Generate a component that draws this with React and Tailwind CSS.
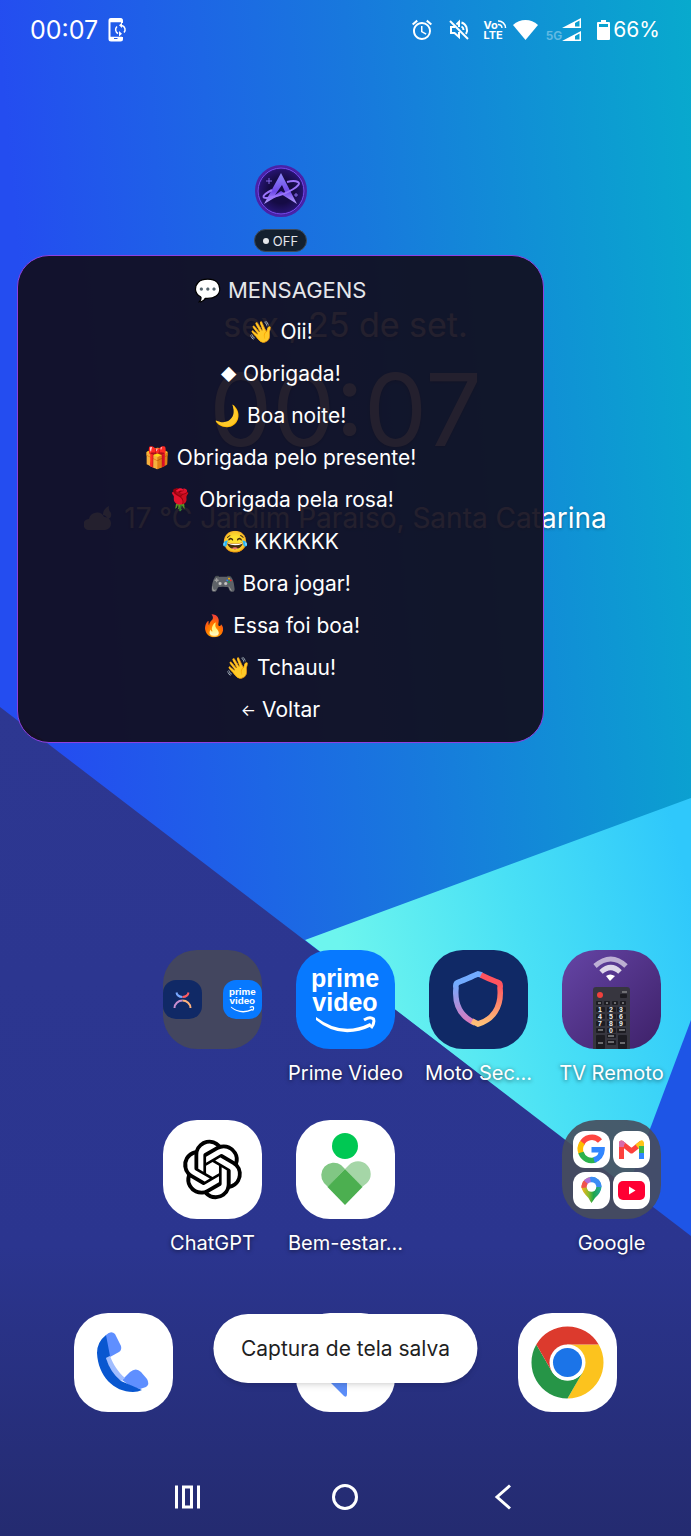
import React from 'react';
import { MdAlarm } from 'react-icons/md';

const messages = [
    { icon: '👋', text: 'Oii!' },
    { icon: '◆', text: 'Obrigada!', small: true },
    { icon: '🌙', text: 'Boa noite!' },
    { icon: '🎁', text: 'Obrigada pelo presente!' },
    { icon: '🌹', text: 'Obrigada pela rosa!' },
    { icon: '😂', text: 'KKKKKK' },
    { icon: '🎮', text: 'Bora jogar!' },
    { icon: '🔥', text: 'Essa foi boa!' },
    { icon: '👋', text: 'Tchauu!' },
    { icon: '←', text: 'Voltar', small: true }
];

const Wallpaper = () => (
    <svg className="absolute inset-0 h-full w-full" viewBox="0 0 691 1536" preserveAspectRatio="none" aria-hidden="true">
        <defs>
            <linearGradient id="sky" gradientUnits="userSpaceOnUse" x1="0" y1="60" x2="691" y2="0">
                <stop offset="0" stopColor="#244df0" />
                <stop offset="0.5" stopColor="#1878dd" />
                <stop offset="1" stopColor="#08aacd" />
            </linearGradient>
            <linearGradient id="beam" gradientUnits="userSpaceOnUse" x1="350" y1="980" x2="691" y2="890">
                <stop offset="0" stopColor="#6df5ee" />
                <stop offset="0.5" stopColor="#49e0f5" />
                <stop offset="1" stopColor="#2fc8fb" />
            </linearGradient>
            <linearGradient id="ground" x1="0" y1="0" x2="0" y2="1">
                <stop offset="0" stopColor="#2d3791" />
                <stop offset="0.65" stopColor="#2b358f" />
                <stop offset="1" stopColor="#242b70" />
            </linearGradient>
        </defs>
        <rect width="691" height="1536" fill="url(#sky)" />
        <path d="M305 940L691 798V1240L629 1190Z" fill="url(#beam)" />
        <path d="M691 1020V1240L627 1190Z" fill="#1e55e6" />
        <path d="M0 707L691 1236V1536H0Z" fill="url(#ground)" />
    </svg>
);

const PhoneSyncIcon = () => (
    <svg width="20" height="24" viewBox="0 0 20 24" fill="none" stroke="currentColor">
        <path d="M14 5V2.5Q14 1 12.500 1H3Q1.500 1 1.500 2.500V21Q1.500 22.500 3 22.500H12.500Q14 22.500 14 21V19" strokeWidth="2" />
        <path d="M1.500 2.500H14M1.500 20.500H14" strokeWidth="3.500" />
        <path d="M6 20.500H9.500" stroke="#1f5de8" strokeWidth="1" />
        <path d="M10 15.500A4.300 4.300 0 0 1 9 8.500M14 7.500A4.300 4.300 0 0 1 16 14.500" strokeWidth="1.500" />
        <path d="M14 4.500V10L11 7.300ZM11 13V18.500L14 15.800Z" fill="currentColor" stroke="none" />
    </svg>
);

const MutedIcon = () => (
    <svg width="22" height="22" viewBox="0 0 22 22" fill="none" stroke="currentColor" strokeWidth="2">
        <path d="M2 2L20 20" />
        <path d="M7 8H3V14H6.500L11 18V13" />
        <path d="M8.500 5.500L11 3V8" />
        <path d="M13.500 3.500A8 8 0 0 1 18 15M13.500 7.500A4 4 0 0 1 15.500 11" />
    </svg>
);

const SignalIcon = () => (
    <svg width="19" height="24" viewBox="0 0 19 24">
        <path d="M0 10L19 0V10Z M0 23L19 13V23Z" fill="currentColor" />
        <path d="M13 5L17.500 2.500V8.500H13Z M13 18L17.500 15.500V21.500H13Z" fill="#0a9fd0" />
    </svg>
);

const StatusBar = () => (
    <header className="flex h-[60px] items-center justify-between pr-[31px] pl-[30px]">
        <div className="flex items-center gap-2.5">
            <span className="text-[25px] leading-7">00:07</span>
            <PhoneSyncIcon />
        </div>
        <div className="flex items-center">
            <MdAlarm size={24} />
            <div className="ml-3.5">
                <MutedIcon />
            </div>
            <div className="relative ml-3.5 text-[11px] leading-[10px] font-bold">
                <p>Vo</p>
                <p>LTE</p>
                <svg className="absolute -top-px left-[13px]" width="10" height="10" viewBox="0 0 10 10" fill="none" stroke="currentColor" strokeWidth="1.500">
                    <path d="M1 2A7 7 0 0 1 8.500 9M1 5.500A4 4 0 0 1 5 9" />
                </svg>
            </div>
            <svg className="ml-2.5" width="25" height="20" viewBox="0 0 25 20" fill="currentColor">
                <path d="M12.500 20L0 5Q5.500 0 12.500 0T25 5Z" />
            </svg>
            <span className="mt-3 ml-2 text-[12px] leading-3 font-semibold opacity-35">5G</span>
            <SignalIcon />
            <svg className="ml-4" width="13" height="20" viewBox="0 0 13 20">
                <path d="M4 0H9V2H12Q13 2 13 3V19Q13 20 12 20H1Q0 20 0 19V3Q0 2 1 2H4Z" fill="currentColor" />
                <path d="M2 4H11V7H2Z" fill="#0aa2cf" />
            </svg>
            <span className="ml-[3px] text-[21px] leading-7">66%</span>
        </div>
    </header>
);

const ClockWidget = () => (
    <section className="flex h-[890px] flex-col items-center pt-[244px] [text-shadow:0_1px_3px_rgba(0,0,0,0.35)]">
        <p className="text-[34px] leading-[42px]">sex., 25 de set.</p>
        <p className="mt-3 text-[100px] leading-[104px]">00:07</p>
        <div className="mt-[38px] flex items-center gap-3">
            <svg width="28" height="26" viewBox="0 0 28 26" fill="currentColor">
                <path d="M5 25A5 5 0 0 1 5 14A8 8 0 0 1 20 12A6.500 6.500 0 0 1 21 25Z" />
                <path d="M19 10Q19 4 25 1Q24 5 27 8Q28 13 24 14Q22 10 19 10Z" />
            </svg>
            <p className="text-[28px] leading-9">17 °C Jardim Paraíso, Santa Catarina</p>
        </div>
    </section>
);

const PrimeArt = () => (
    <svg className="h-full w-full" viewBox="0 0 99 99" fill="#fff">
        <g fontFamily="Liberation Sans, sans-serif" fontWeight="700" fontSize="25" textAnchor="middle">
            <text x="49" y="37">prime</text>
            <text x="49" y="61">video</text>
        </g>
        <path d="M20 67Q46 87 74 73L76 76Q45 91 20 70Z" />
        <path d="M68 70Q74 66 77.500 69Q79 73 75 78" fill="none" stroke="#fff" strokeWidth="3" />
    </svg>
);

const ShieldArt = () => (
    <svg className="h-full w-full" viewBox="0 0 99 99" fill="none">
        <defs>
            <linearGradient id="shieldLeft" x1="0" y1="0" x2="0" y2="1">
                <stop offset="0.2" stopColor="#72abff" />
                <stop offset="1" stopColor="#dc79bd" />
            </linearGradient>
            <linearGradient id="shieldRight" x1="0" y1="0" x2="0" y2="1">
                <stop offset="0.2" stopColor="#ff535f" />
                <stop offset="1" stopColor="#ffc078" />
            </linearGradient>
        </defs>
        <path d="M53 25L49 24L44 26Q40 28 30 32Q26 33 27 38C25 58 35 68 46 73" stroke="url(#shieldLeft)" strokeWidth="5.500" />
        <path d="M52 25Q60 29 68 32Q72 33 71 38C73 58 63 70 49 74L43 71" stroke="url(#shieldRight)" strokeWidth="5.500" />
    </svg>
);

const RemoteArt = () => (
    <svg className="h-full w-full" viewBox="0 0 99 99">
        <g fill="none" stroke="#fff" strokeWidth="5">
            <path d="M33 16Q49 2 64 16" opacity="0.600" />
            <path d="M39 22Q49 13 58 22" opacity="0.800" />
        </g>
        <path d="M44 26Q48 23 53 26L48 31Z" fill="#fff" />
        <path d="M31 99V40Q31 37 34 37H65Q68 37 68 40V99Z" fill="#37363f" />
        <circle cx="38" cy="45" r="3" fill="#f0403c" />
        <path d="M60 42H65" stroke="#aaa" />
        <g fill="#1d1c22">
            <rect x="58" y="44" width="7" height="4" rx="1" />
            {[34, 42, 50, 58].map((x) => (
                <rect key={x} x={x} y="51" width="6" height="4" rx="1" />
            ))}
            {[57, 64, 71, 78].map((y) => [34, 45, 55].map((x) => (
                <rect key={`${x}-${y}`} x={x} y={y} width="9" height="5" rx="1" />
            )))}
            <rect x="34" y="85" width="9" height="14" rx="1" />
            <rect x="45" y="84" width="9" height="4" rx="1" />
            <rect x="45" y="90" width="9" height="5" rx="1" />
            <rect x="56" y="85" width="9" height="14" rx="1" />
        </g>
        <g fill="#eee" fontFamily="Liberation Sans, sans-serif" fontWeight="700" fontSize="7" textAnchor="middle">
            <text x="38" y="62">1</text>
            <text x="49" y="62">2</text>
            <text x="59" y="62">3</text>
            <text x="38" y="69">4</text>
            <text x="49" y="69">5</text>
            <text x="59" y="69">6</text>
            <text x="38" y="76">7</text>
            <text x="49" y="76">8</text>
            <text x="59" y="76">9</text>
            <text x="49" y="83">0</text>
        </g>
        <path d="M36 53H39M44 53H46M52 53H54M60 53H62M36 80H41M57 80H63M46 86H52M46 92H52M36 93H41M58 93H63" stroke="#bbb" />
    </svg>
);

const ChatGptArt = () => (
    <svg className="h-full w-full" viewBox="-8 -8 40 40" fill="#000">
        <path d="M22.2819 9.8211a5.9847 5.9847 0 0 0-.5157-4.9108 6.0462 6.0462 0 0 0-6.5098-2.9A6.0651 6.0651 0 0 0 4.9807 4.1818a5.9847 5.9847 0 0 0-3.9977 2.9 6.0462 6.0462 0 0 0 .7427 7.0966 5.98 5.98 0 0 0 .511 4.9107 6.051 6.051 0 0 0 6.5146 2.9001A5.9847 5.9847 0 0 0 13.2599 24a6.0557 6.0557 0 0 0 5.7718-4.2058 5.9894 5.9894 0 0 0 3.9977-2.9001 6.0557 6.0557 0 0 0-.7475-7.0729zm-9.022 12.6081a4.4755 4.4755 0 0 1-2.8764-1.0408l.1419-.0804 4.7783-2.7582a.7948.7948 0 0 0 .3927-.6813v-6.7369l2.02 1.1686a.071.071 0 0 1 .038.052v5.5826a4.504 4.504 0 0 1-4.4945 4.4944zm-9.6607-4.1254a4.4708 4.4708 0 0 1-.5346-3.0137l.142.0852 4.783 2.7582a.7712.7712 0 0 0 .7806 0l5.8428-3.3685v2.3324a.0804.0804 0 0 1-.0332.0615L9.74 19.9502a4.4992 4.4992 0 0 1-6.1408-1.6464zM2.3408 7.8956a4.485 4.485 0 0 1 2.3655-1.9728V11.6a.7664.7664 0 0 0 .3879.6765l5.8144 3.3543-2.0201 1.1685a.0757.0757 0 0 1-.071 0l-4.8303-2.7865A4.504 4.504 0 0 1 2.3408 7.872zm16.5963 3.8558L13.1038 8.364 15.1192 7.2a.0757.0757 0 0 1 .071 0l4.8303 2.7913a4.4944 4.4944 0 0 1-.6765 8.1042v-5.6772a.79.79 0 0 0-.407-.667zm2.0107-3.0231l-.142-.0852-4.7735-2.7818a.7759.7759 0 0 0-.7854 0L9.409 9.2297V6.8974a.0662.0662 0 0 1 .0284-.0615l4.8303-2.7866a4.4992 4.4992 0 0 1 6.6802 4.66zM8.3065 12.863l-2.02-1.1638a.0804.0804 0 0 1-.038-.0567V6.0742a4.4992 4.4992 0 0 1 7.3757-3.4537l-.142.0805L8.704 5.459a.7948.7948 0 0 0-.3927.6813zm1.0976-2.3654l2.602-1.4998 2.6069 1.4998v2.9994l-2.5974 1.4997-2.6067-1.4997Z" />
    </svg>
);

const WellbeingArt = () => (
    <svg className="h-full w-full" viewBox="0 0 99 99">
        <circle cx="49" cy="26" r="13" fill="#00c853" />
        <path d="M32 67L28 63A12.500 12.500 0 0 1 45 45L49 49Z" fill="#81c784" />
        <path d="M66 67L71 63A12.500 12.500 0 0 0 53 45L49 49Z" fill="#a5d6a7" />
        <path d="M49 49L66.500 67L49 85L31.500 67Z" fill="#4caf50" />
    </svg>
);

const PhoneArt = () => (
    <svg className="h-full w-full" viewBox="0 0 99 99">
        <path d="M32 22Q37 17 41 21L47 33Q48 37 45 39L36 44Q30 35 32 22Z" fill="#5f8fff" />
        <path d="M48 67L56 59Q62 54 67 59L73 66Q76 71 72 74L66 76Q58 75 48 67Z" fill="#5f8fff" />
        <path d="M32 45L36 43C39 51 44 59 51 65L47 68C38 62 34 54 32 45Z" fill="#a1bdff" />
        <path d="M36 43L32 22Q23 29 23 40C24 63 40 79 59 79Q64 79 68 77L47 68Q36 59 32 45Z" fill="#0957d0" />
    </svg>
);

const MessagesArt = () => (
    <svg className="h-full w-full" viewBox="0 0 99 99">
        <path d="M22 30Q22 25 27 25H73Q78 25 78 30V62Q78 67 73 67H51V81Q51 85 48 83L32 67Q22 60 22 52Z" fill="#5b8df8" />
    </svg>
);

const ChromeArt = () => (
    <svg className="h-full w-full" viewBox="0 0 99 99">
        <path d="M49.500 31.500H80.700A36 36 0 0 1 49.500 85.500L65 58.500Z" fill="#fcc31e" />
        <path d="M65.100 58.500L49.500 85.500A36 36 0 0 1 18.300 31.500L33.900 58.500A18 18 0 0 0 65.100 58.500Z" fill="#269547" />
        <path d="M18.300 31.500A36 36 0 0 1 80.700 31.500H49.500L33.900 58.500Z" fill="#dc3a2d" />
        <circle cx="49.500" cy="49.500" r="18" fill="#fff" />
        <circle cx="49.500" cy="49.500" r="14.500" fill="#1b74e8" />
    </svg>
);

const GoogleG = () => (
    <svg viewBox="0 0 37 37" fill="none" strokeWidth="5.500">
        <path d="M27 10A11 11 0 0 0 8.500 13.500" stroke="#ff4641" />
        <path d="M9.500 11.500A11 11 0 0 0 8.500 23" stroke="#fdbd00" />
        <path d="M8 21.500A11 11 0 0 0 23 28.500" stroke="#2bb24c" />
        <path d="M21 29A11 11 0 0 0 29 18.800H18.500" stroke="#3186ff" />
    </svg>
);

const GmailM = () => (
    <svg viewBox="0 0 37 37" fill="none" strokeWidth="5">
        <path d="M8.500 28V12L18.500 20L28.500 12" stroke="#fc413d" strokeLinejoin="round" />
        <path d="M8.500 16V12L11 14" stroke="#d96aa8" strokeLinejoin="round" />
        <path d="M24 15.500L28.500 12V15" stroke="#fdc316" strokeLinejoin="round" />
        <path d="M28.500 15V22" stroke="#3bb54a" />
        <path d="M28.500 22V28" stroke="#3186ff" />
    </svg>
);

const MapsPin = () => (
    <svg viewBox="0 0 37 37">
        <defs>
            <linearGradient id="pin" x1="0" y1="0" x2="1" y2="0">
                <stop offset="0" stopColor="#fbb31b" />
                <stop offset="0.350" stopColor="#8dbb2c" />
                <stop offset="0.600" stopColor="#1ea64a" />
                <stop offset="1" stopColor="#25a9a0" />
            </linearGradient>
        </defs>
        <path d="M18.500 31Q17 29 15.500 26Q8.500 19 8.500 15A10 10 0 0 1 28.500 15Q28 21 22 26Z" fill="url(#pin)" />
        <path d="M18.500 15L8.500 16A10 10 0 0 1 12 7.500Z" fill="#f0524d" />
        <path d="M18.500 15L11 8.500A10 10 0 0 1 18.500 5Z" fill="#b06fd8" />
        <path d="M18.500 15L17 5A10 10 0 0 1 28.500 15Z" fill="#3c8cf5" />
        <circle cx="18.500" cy="15" r="4.800" fill="#fff" />
    </svg>
);

const YouTubeMark = () => (
    <svg viewBox="0 0 37 37">
        <rect x="5" y="9" width="27" height="19" rx="5" fill="#ff0033" />
        <path d="M16 14.500V22.500L22.500 18.500Z" fill="#fff" />
    </svg>
);

const MotoMark = () => (
    <svg viewBox="0 0 39 39" fill="none" strokeWidth="2">
        <path d="M13.500 12.500A6.500 5 0 0 0 19.500 17" stroke="#78a8ff" />
        <path d="M19.500 17A6.500 5 0 0 0 25.500 12.500" stroke="#ff5b62" />
        <path d="M11.500 28A8 7.500 0 0 1 19.500 20.500" stroke="#c98fd0" />
        <path d="M19.500 20.500A8 7.500 0 0 1 27.500 28" stroke="#ffb27c" />
    </svg>
);

const Tile = ({ className = 'bg-white', children }) => (
    <div className={`h-[99px] w-[99px] overflow-hidden rounded-[34px] ${className}`}>{children}</div>
);

const AppButton = ({ label, children }) => (
    <button type="button" aria-label={label || 'Pasta'} className="flex h-[170px] flex-col items-center">
        {children}
        <span className="mt-2.5 text-[20px] leading-7 whitespace-nowrap [text-shadow:0_1px_4px_rgba(0,0,0,0.6)]">{label}</span>
    </button>
);

const AppGrid = () => (
    <main className="grid grid-cols-5 px-[13px]">
        <div />
        <AppButton>
            <Tile className="flex items-center justify-between bg-[#43465f]">
                <div className="h-[39px] w-[39px] overflow-hidden rounded-[13px] bg-[#102966]"><MotoMark /></div>
                <div className="h-[39px] w-[39px] overflow-hidden rounded-[13px] bg-[#0779ff]"><PrimeArt /></div>
            </Tile>
        </AppButton>
        <AppButton label="Prime Video"><Tile className="bg-[#0779ff]"><PrimeArt /></Tile></AppButton>
        <AppButton label="Moto Sec..."><Tile className="bg-[#102966]"><ShieldArt /></Tile></AppButton>
        <AppButton label="TV Remoto"><Tile className="bg-linear-to-br from-[#6545a6] to-[#3e2169]"><RemoteArt /></Tile></AppButton>
        <div />
        <AppButton label="ChatGPT"><Tile><ChatGptArt /></Tile></AppButton>
        <AppButton label="Bem-estar..."><Tile><WellbeingArt /></Tile></AppButton>
        <div />
        <AppButton label="Google">
            <Tile className="grid grid-cols-2 place-content-center justify-items-center gap-y-1 bg-[#474c5c]/90 px-[9px]">
                {[GoogleG, GmailM, MapsPin, YouTubeMark].map((Mark, index) => (
                    <div key={index} className="h-[37px] w-[37px] rounded-xl bg-white"><Mark /></div>
                ))}
            </Tile>
        </AppButton>
    </main>
);

const Dock = () => (
    <div className="mt-[23px] grid grid-cols-3 items-start justify-items-center px-[13px]">
        <button type="button" aria-label="Telefone"><Tile><PhoneArt /></Tile></button>
        <div className="relative flex">
            <button type="button" aria-label="Mensagens"><Tile><MessagesArt /></Tile></button>
            <div role="status" className="absolute top-px left-1/2 -translate-x-1/2 rounded-full bg-white px-[27px] pt-[21px] pb-5 text-[21px] leading-7 whitespace-nowrap text-[#1f1f1f] shadow-md">
                Captura de tela salva
            </div>
        </div>
        <button type="button" aria-label="Chrome"><Tile><ChromeArt /></Tile></button>
    </div>
);

const NavBar = () => (
    <nav className="mt-[71px] grid grid-cols-3 justify-items-center px-[108px] pb-5">
        <button type="button" aria-label="Recentes">
            <svg width="28" height="28" viewBox="0 0 28 28" fill="none" stroke="currentColor" strokeWidth="3">
                <path d="M3.500 2.500V25.500M25.500 2.500V25.500M10.500 4H18.500V24H10.500Z" />
            </svg>
        </button>
        <button type="button" aria-label="Início">
            <svg width="28" height="28" viewBox="0 0 28 28" fill="none" stroke="currentColor" strokeWidth="3">
                <circle cx="14" cy="14" r="11.500" />
            </svg>
        </button>
        <button type="button" aria-label="Voltar">
            <svg width="28" height="28" viewBox="0 0 28 28" fill="none" stroke="currentColor" strokeWidth="3">
                <path d="M20 2.500L7 14L20 25.500" />
            </svg>
        </button>
    </nav>
);

const FloatingLogo = () => (
    <svg width="52" height="52" viewBox="0 0 52 52">
        <defs>
            <radialGradient id="orb">
                <stop offset="0.500" stopColor="#150b45" />
                <stop offset="0.850" stopColor="#24136c" />
                <stop offset="1" stopColor="#4a25b4" />
            </radialGradient>
            <linearGradient id="letter" x1="0" y1="0" x2="0" y2="1">
                <stop offset="0" stopColor="#8d8af8" />
                <stop offset="0.600" stopColor="#6f48ea" />
                <stop offset="1" stopColor="#b9a6ff" />
            </linearGradient>
        </defs>
        <circle cx="26" cy="26" r="25" fill="url(#orb)" stroke="#4a22a8" strokeWidth="2" />
        <circle cx="26" cy="26" r="23" fill="none" stroke="#7a4df0" strokeWidth="1" />
        <path d="M26 8L42 39L26 29L9 39Z" fill="url(#letter)" />
        <path d="M27 20L31 29L26 26L20 30Z" fill="#160a48" />
        <path d="M17 25C5 31 6 35 18 32C32 29 48 20 43 17Q39 15 32 17" fill="none" stroke="#9a74fa" strokeWidth="2" />
        <path d="M14 13V19M11 16H17M41 28V32M39 30H43" stroke="#8468e8" strokeWidth="1" />
    </svg>
);

const FloatingMenu = () => (
    <aside className="absolute top-[165px] right-[147px] left-[17px] flex flex-col items-center">
        <FloatingLogo />
        <button type="button" className="mt-3 flex h-[23px] items-center gap-1 rounded-full border border-[#3f4a58] bg-[#14202f] px-2 text-[13px] leading-4 text-gray-200">
            <span className="h-1.5 w-1.5 rounded-full bg-gray-200" />
            OFF
        </button>
        <div className="mt-[3px] flex w-full flex-col items-center rounded-[32px] border border-[#8f40e0] bg-[#110d1c]/92 pt-3 pb-[11px]">
            <h1 className="flex h-[43px] items-center gap-1.5 text-[22px] leading-7 text-gray-200">
                <span>💬</span>
                MENSAGENS
            </h1>
            {messages.map(({ icon, text, small }) => (
                <button key={text} type="button" className="flex h-[42px] items-center gap-1.5 text-[21px] leading-7">
                    <span className={small ? 'text-[16px]' : 'text-[21px]'}>{icon}</span>
                    {text}
                </button>
            ))}
        </div>
    </aside>
);

const App = () => (
    <div className="relative isolate min-h-screen overflow-hidden bg-[#2b358f] font-['Inter','Noto_Color_Emoji',sans-serif] text-white">
        <Wallpaper />
        <div className="relative">
            <StatusBar />
            <ClockWidget />
            <AppGrid />
            <Dock />
            <NavBar />
        </div>
        <FloatingMenu />
    </div>
);

export default App;
